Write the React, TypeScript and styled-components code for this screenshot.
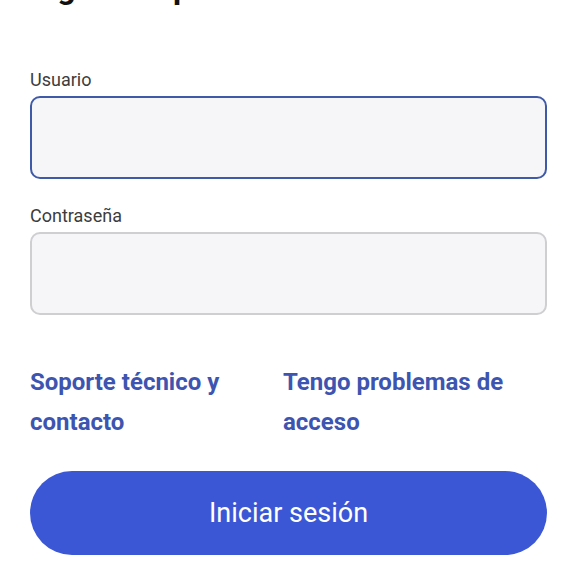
import React, { useState } from "react";
import styled, { createGlobalStyle } from "styled-components";

const GlobalStyle = createGlobalStyle`
  html, body {
    margin: 0;
    padding: 0;
    background: #ffffff;
    font-family: Roboto, "Noto Sans", sans-serif;
    overflow: hidden;
  }
`;

const Page = styled.div`
  width: 517px;
  padding: 0 23px 0 30px;
  display: flex;
  flex-direction: column;
`;

const Title = styled.h1`
  margin: -30px 0 0 0;
  font-size: 32px;
  line-height: 36px;
  font-weight: 700;
  color: #111111;
  white-space: nowrap;
`;

const Form = styled.form`
  display: flex;
  flex-direction: column;
  margin-top: 64px;
`;

const Field = styled.div`
  display: flex;
  flex-direction: column;
  gap: 6px;
  margin-bottom: 27px;
`;

const Label = styled.label`
  font-size: 18px;
  line-height: 20px;
  color: #3c3c3c;
`;

const TextInput = styled.input<{ $active?: boolean }>`
  box-sizing: border-box;
  width: 100%;
  height: 83px;
  border-radius: 10px;
  border: 2px solid ${(p) => (p.$active ? "#3f5aa8" : "#cfcfd2")};
  background: #f6f5f8;
  outline: none;
  padding: 0 16px;
  font-size: 18px;
  font-family: inherit;
`;

const Links = styled.div`
  display: grid;
  grid-template-columns: 253px 1fr;
  margin-top: 20px;
`;

const LinkText = styled.a`
  font-size: 24px;
  line-height: 40px;
  font-weight: 700;
  color: #3d55b0;
  text-decoration: none;
  width: 240px;
`;

const SubmitButton = styled.button`
  margin-top: 29px;
  height: 84px;
  width: 100%;
  border: none;
  border-radius: 42px;
  background: #3b57d5;
  color: #ffffff;
  font-family: inherit;
  font-size: 27px;
  font-weight: 400;
  cursor: pointer;
`;

const App = () => {
  const [user, setUser] = useState<string>("");
  const [pass, setPass] = useState<string>("");

  return (
    <>
      <GlobalStyle />
      <Page>
        <Title>Ingresa aquí tus datos de acceso</Title>
        <Form onSubmit={(e) => e.preventDefault()}>
          <Field>
            <Label htmlFor="usuario">Usuario</Label>
            <TextInput
              id="usuario"
              $active
              value={user}
              onChange={(e) => setUser(e.target.value)}
            />
          </Field>
          <Field>
            <Label htmlFor="clave">Contraseña</Label>
            <TextInput
              id="clave"
              type="password"
              value={pass}
              onChange={(e) => setPass(e.target.value)}
            />
          </Field>
        </Form>
        <Links>
          <LinkText href="#">Soporte técnico y contacto</LinkText>
          <LinkText href="#">Tengo problemas de acceso</LinkText>
        </Links>
        <SubmitButton type="button">Iniciar sesión</SubmitButton>
      </Page>
    </>
  );
};

export default App;
